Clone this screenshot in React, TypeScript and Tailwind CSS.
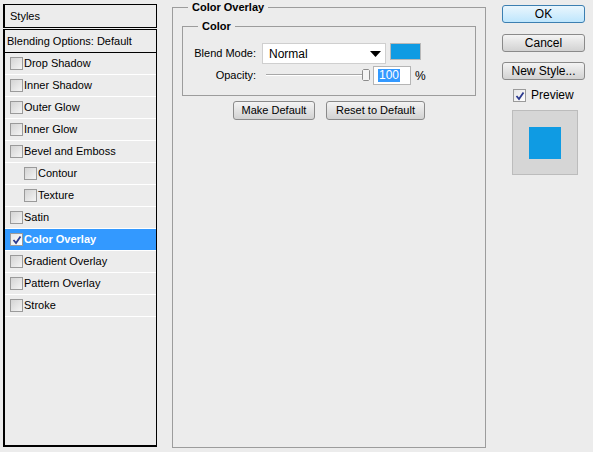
import React from 'react';

const font = "font-['Liberation_Sans',Arial,sans-serif] text-[11px] text-black";

const Check: React.FC<{ checked?: boolean }> = ({ checked }) => (
  <span
    className={`relative inline-block w-[13px] h-[13px] shrink-0 border border-[#9a9a9a] ${
      checked ? 'bg-gradient-to-br from-[#e6e6e6] to-[#ffffff]' : 'bg-gradient-to-br from-[#d4d4d4] to-[#f4f4f4]'
    }`}
  >
    {checked && (
      <svg className="absolute left-[1px] top-[1px]" width="10" height="10" viewBox="0 0 10 10">
        <path d="M1.5 5 L4 8 L8.5 1.5" fill="none" stroke="#2c3a8f" strokeWidth="1.8" />
      </svg>
    )}
  </span>
);

const effects: { name: string; indent?: boolean; checked?: boolean }[] = [
  { name: 'Drop Shadow' },
  { name: 'Inner Shadow' },
  { name: 'Outer Glow' },
  { name: 'Inner Glow' },
  { name: 'Bevel and Emboss' },
  { name: 'Contour', indent: true },
  { name: 'Texture', indent: true },
  { name: 'Satin' },
  { name: 'Color Overlay', checked: true },
  { name: 'Gradient Overlay' },
  { name: 'Pattern Overlay' },
  { name: 'Stroke' },
];

const Btn: React.FC<{ label: string; w: string; focus?: boolean; big?: boolean }> = ({ label, w, focus, big }) => (
  <div
    className={`${w} ${big ? 'h-[18px] text-[12px]' : 'h-[19px]'} flex items-center justify-center rounded-[3px] border ${
      focus
        ? 'border-[#3c7fb1] bg-gradient-to-b from-[#eaf6fd] to-[#bee6fd]'
        : 'border-[#8a8a8a] bg-gradient-to-b from-[#f4f4f4] to-[#d2d2d2]'
    }`}
  >
    {label}
  </div>
);

export default function App() {
  return (
    <div className={`${font} w-[593px] h-[452px] bg-[#ececec] flex`}>
      {/* Styles list */}
      <div className="ml-[3px] mt-[4px] w-[154px] h-[443px] flex flex-col">
        <div className="h-[24px] border border-black border-l-2 flex items-center pl-[5px]">Styles</div>
        <div className="mt-[1px] flex-1 border border-black border-l-2 border-b-2 flex flex-col">
          <div className="h-[23px] border-b border-black flex items-center pl-[2px]">Blending Options: Default</div>
          {effects.map((e) => (
            <div
              key={e.name}
              className={`h-[22px] border-b border-white flex items-center gap-[1px] ${e.indent ? 'pl-[19px]' : 'pl-[5px]'} ${
                e.checked ? 'bg-[#3399ff] text-white font-bold' : ''
              }`}
            >
              <Check checked={e.checked} />
              <span>{e.name}</span>
            </div>
          ))}
        </div>
      </div>

      {/* Color Overlay settings */}
      <fieldset className="ml-[15px] w-[314px] h-[448px] border border-[#9c9c9c] px-[9px]">
        <legend className="ml-[6px] px-[4px] font-bold leading-[14px]">Color Overlay</legend>
        <fieldset className="mt-[5px] border border-[#9c9c9c] pb-[10px]">
          <legend className="ml-[15px] px-[4px] font-bold leading-[14px]">Color</legend>
          <div className="pt-[10px] flex items-start">
            <div className="w-[73px] h-[21px] flex items-center justify-end">Blend Mode:</div>
            <div className="ml-[6px] w-[124px] h-[21px] bg-white border border-[#cfcfcf] flex items-center pl-[6px] pr-[4px] justify-between text-[12px]">
              <span>Normal</span>
              <svg width="11" height="6" viewBox="0 0 11 6">
                <path d="M0 0 H11 L5.5 6 Z" fill="#000" />
              </svg>
            </div>
            <div className="ml-[4px] w-[31px] h-[17px] bg-[#0f9be3] border border-[#b8b8b8]" />
          </div>
          <div className="mt-[2px] flex items-center">
            <div className="w-[73px] h-[19px] flex items-center justify-end">Opacity:</div>
            <div className="ml-[10px] w-[104px] h-[19px] relative">
              <div className="absolute left-0 right-[4px] top-[8px] h-[2px] border-t border-[#a8a8a8] border-b border-b-white" />
              <svg className="absolute left-[96px] top-[3px]" width="8" height="12" viewBox="0 0 8 12">
                <path d="M1.5 0.5 H6.5 L7.5 1.5 V10.5 L6.5 11.5 H1.5 L0.5 10.5 V1.5 Z" fill="#f4f4f4" stroke="#8c8c8c" />
              </svg>
            </div>
            <div className="ml-[3px] w-[38px] h-[19px] bg-white border border-[#b5b5b5] flex items-center pl-[4px]">
              <span className="bg-[#3399ff] text-white px-[1px] leading-[13px] text-[12px]">100</span>
            </div>
            <span className="ml-[4px] text-[12px]">%</span>
          </div>
        </fieldset>
        <div className="mt-[5px] flex justify-center gap-[11px]">
          <Btn label="Make Default" w="w-[82px]" />
          <Btn label="Reset to Default" w="w-[99px]" />
        </div>
      </fieldset>

      {/* Buttons */}
      <div className="ml-[16px] w-[83px] pt-[5px] flex flex-col items-center">
        <Btn label="OK" w="w-[83px]" focus big />
        <div className="mt-[11px]">
          <Btn label="Cancel" w="w-[83px]" big />
        </div>
        <div className="mt-[10px]">
          <Btn label="New Style..." w="w-[83px]" big />
        </div>
        <div className="mt-[6px] self-start ml-[11px] flex items-center gap-[5px]">
          <Check checked />
          <span className="text-[12px]">Preview</span>
        </div>
        <div className="mt-[6px] self-start ml-[10px] w-[66px] h-[65px] bg-[#d6d6d6] border border-[#bcbcbc] flex items-center justify-center">
          <div className="w-[32px] h-[32px] bg-[#0f9be3]" />
        </div>
      </div>
    </div>
  );
}
